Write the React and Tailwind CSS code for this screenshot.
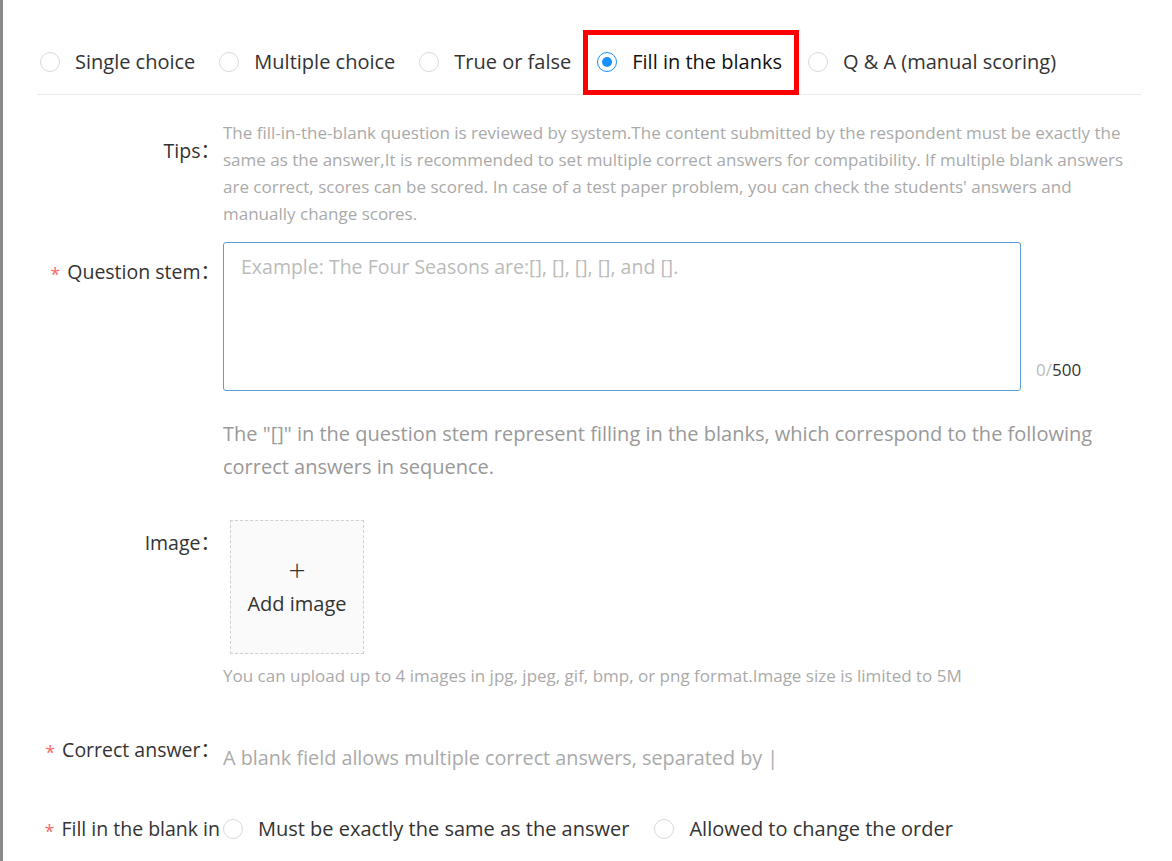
import React from 'react';

const FONT = { fontFamily: '"Open Sans", "Noto Sans", "Noto Sans CJK SC", sans-serif' };

function Radio({ checked }) {
    return (
        <span
            className={
                'flex h-[20px] w-[20px] shrink-0 items-center justify-center rounded-full border bg-white ' +
                (checked ? 'border-[#1890ff]' : 'border-[#d9d9d9]')
            }
        >
            {checked && <span className="h-[10px] w-[10px] rounded-full bg-[#1890ff]" />}
        </span>
    );
}

function Label({ children, required, className = '' }) {
    return (
        <div className={'flex w-[183px] shrink-0 justify-end text-[19.5px] leading-[24px] text-[#333] ' + className}>
            <span className="whitespace-nowrap">
                {required && <span className="relative top-[2px] mr-[7px] text-[18px] text-[#f56c6c]">*</span>}
                {children}
            </span>
        </div>
    );
}

export default function App() {
    const types = ['Single choice', 'Multiple choice', 'True or false'];

    return (
        <div className="flex min-h-[861px] w-[1172px] bg-white" style={FONT}>
            {/* grey edge of the page behind the dialog */}
            <div className="w-[3px] shrink-0 bg-[#8a8a8a]" />

            <div className="w-[1138px] pl-[34px] pt-[30px]">
                {/* question type selector */}
                <div className="flex h-[65px] items-center border-b border-[#ebebeb] text-[20px] text-[#333]">
                    <div className="flex items-center pl-[3px]">
                        {types.map((t) => (
                            <label key={t} className="mr-[24px] flex items-center gap-[15px]">
                                <Radio />
                                <span>{t}</span>
                            </label>
                        ))}
                    </div>
                    <div className="ml-[-12px] flex h-[65px] items-center gap-[15px] border-[5px] border-[#f00] pl-[9px] pr-[12px] text-[#111]">
                        <Radio checked />
                        <span>Fill in the blanks</span>
                    </div>
                    <label className="ml-[9px] flex items-center gap-[15px]">
                        <Radio />
                        <span>Q &amp; A (manual scoring)</span>
                    </label>
                </div>

                {/* tips */}
                <div className="mt-[24px] flex gap-[3px]">
                    <Label className="pt-[20px]">Tips：</Label>
                    <p className="w-[930px] text-[17px] leading-[27px] text-[#aaa]">
                        The fill-in-the-blank question is reviewed by system.The content submitted by the respondent must be exactly the<br />
                        same as the answer,It is recommended to set multiple correct answers for compatibility. If multiple blank answers<br />
                        are correct, scores can be scored. In case of a test paper problem, you can check the students' answers and<br />
                        manually change scores.
                    </p>
                </div>

                {/* question stem */}
                <div className="mt-[15px] flex gap-[3px]">
                    <Label required className="pt-[18px]">Question stem：</Label>
                    <div className="flex items-end gap-[15px]">
                        <div className="h-[149px] w-[798px] rounded-[3px] border border-[#5b9fd6] px-[17px] pt-[10px] text-[19.5px] leading-[28px] text-[#bbb]">
                            Example: The Four Seasons are:[], [], [], [], and [].
                        </div>
                        <div className="mb-[10px] text-[17px] leading-[22px]">
                            <span className="text-[#bbb]">0/</span>
                            <span className="text-[#333]">500</span>
                        </div>
                    </div>
                </div>

                <div className="mt-[26px] flex gap-[3px]">
                    <div className="w-[183px] shrink-0" />
                    <p className="w-[930px] text-[20px] leading-[33px] text-[#999]">
                        The "[]" in the question stem represent filling in the blanks, which correspond to the following<br />
                        correct answers in sequence.
                    </p>
                </div>

                {/* image */}
                <div className="mt-[37px] flex gap-[3px]">
                    <Label className="pt-[11px]">Image：</Label>
                    <div>
                        <div className="ml-[7px] flex h-[134px] w-[134px] flex-col items-center justify-center border border-dashed border-[#d0d0d0] bg-[#fafafa] text-[#333]">
                            <span className="text-[30px] font-light leading-[30px]">+</span>
                            <span className="mt-[4px] text-[20px] leading-[30px]">Add image</span>
                        </div>
                        <p className="mt-[11px] text-[17px] leading-[22px] text-[#aaa]">
                            You can upload up to 4 images in jpg, jpeg, gif, bmp, or png format.Image size is limited to 5M
                        </p>
                    </div>
                </div>

                {/* correct answer */}
                <div className="mt-[51px] flex gap-[3px]">
                    <Label required>Correct answer：</Label>
                    <div className="pt-[8px] text-[19.8px] leading-[24px] text-[#aaa]">
                        A blank field allows multiple correct answers, separated by |
                    </div>
                </div>

                {/* fill in mode */}
                <div className="mt-[44px] flex items-center gap-[3px]">
                    <Label required>Fill in the blank in</Label>
                    <div className="flex items-center text-[20px] text-[#333]">
                        <label className="mr-[25px] flex items-center gap-[15px]">
                            <Radio />
                            <span>Must be exactly the same as the answer</span>
                        </label>
                        <label className="flex items-center gap-[15px]">
                            <Radio />
                            <span>Allowed to change the order</span>
                        </label>
                    </div>
                </div>
            </div>
        </div>
    );
}
